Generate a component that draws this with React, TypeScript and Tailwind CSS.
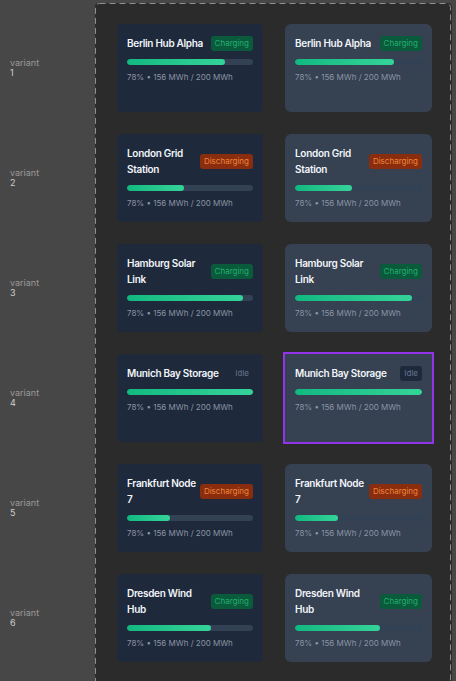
type Status = "Charging" | "Discharging" | "Idle";

type Site = {
  name: string;
  status: Status;
  fill: number;
};

const sites: Site[] = [
  { name: "Berlin Hub Alpha", status: "Charging", fill: 78 },
  { name: "London Grid Station", status: "Discharging", fill: 45 },
  { name: "Hamburg Solar Link", status: "Charging", fill: 92 },
  { name: "Munich Bay Storage", status: "Idle", fill: 100 },
  { name: "Frankfurt Node 7", status: "Discharging", fill: 34 },
  { name: "Dresden Wind Hub", status: "Charging", fill: 67 },
];

const badgeClass: Record<Status, string> = {
  Charging: "bg-[#0a5a3c] text-[#22b06e]",
  Discharging: "bg-[#8a2d0f] text-[#f0863a]",
  Idle: "bg-[#1e293b] text-[#64748b]",
};

function Card({ site, light, selected }: { site: Site; light?: boolean; selected?: boolean }) {
  const shell = light
    ? selected
      ? "bg-[#364152] outline-2 outline-[#9333ea]"
      : "bg-[#364152] rounded-md"
    : "bg-[#1e293b] rounded-sm";
  return (
    <div className={`h-[88px] px-[10px] pt-[11px] ${shell}`}>
      <div className="flex items-center justify-between gap-[2px]">
        <div className="text-[10px] leading-4 font-semibold tracking-[-0.3px] text-[#f1f5f9]">{site.name}</div>
        <span
          className={`shrink-0 rounded-[3px] px-[4px] h-[15px] flex items-center text-[8px] ${badgeClass[site.status]}`}
        >
          {site.status}
        </span>
      </div>
      <div className="mt-2 h-1.5 rounded-full bg-[#334155] overflow-hidden">
        <div
          className="h-full rounded-full bg-gradient-to-r from-[#10b981] to-[#34d399]"
          style={{ width: `${site.fill}%` }}
        />
      </div>
      <div className="mt-[6px] text-[8px] leading-3 text-[#8b95a5]">78% • 156 MWh / 200 MWh</div>
    </div>
  );
}

export default function App() {
  return (
    <div
      className="flex min-h-[681px] bg-[#474747] overflow-hidden"
      style={{ fontFamily: "Inter, 'Noto Sans', sans-serif" }}
    >
      <div className="w-[95px] shrink-0 pt-6 flex flex-col gap-[22px]">
        {sites.map((s, i) => (
          <div key={s.name} className="h-[88px] flex flex-col justify-center pl-[10px]">
            <span className="text-[9px] leading-[10px] text-[#9a9a9a]">variant</span>
            <span className="text-[9px] leading-[10px] text-[#cfcfcf]">{i + 1}</span>
          </div>
        ))}
      </div>
      <div className="relative mt-[3px] w-[357px] shrink-0 rounded-t-[4px] bg-[#2b2b2b] pt-[21px] pl-[22px]">
        <svg className="absolute inset-0 w-full h-full pointer-events-none" preserveAspectRatio="none">
          <rect
            x="0.5"
            y="0.5"
            width="355"
            height="720"
            rx="4"
            fill="none"
            stroke="#8f8f8f"
            strokeDasharray="6 4"
          />
        </svg>
        <div className="grid grid-cols-[146px_147px] gap-x-[22px] gap-y-[22px]">
          {sites.map((s) => (
            <>
              <Card key={s.name + "a"} site={s} />
              <Card key={s.name + "b"} site={s} light selected={s.status === "Idle"} />
            </>
          ))}
        </div>
      </div>
    </div>
  );
}
